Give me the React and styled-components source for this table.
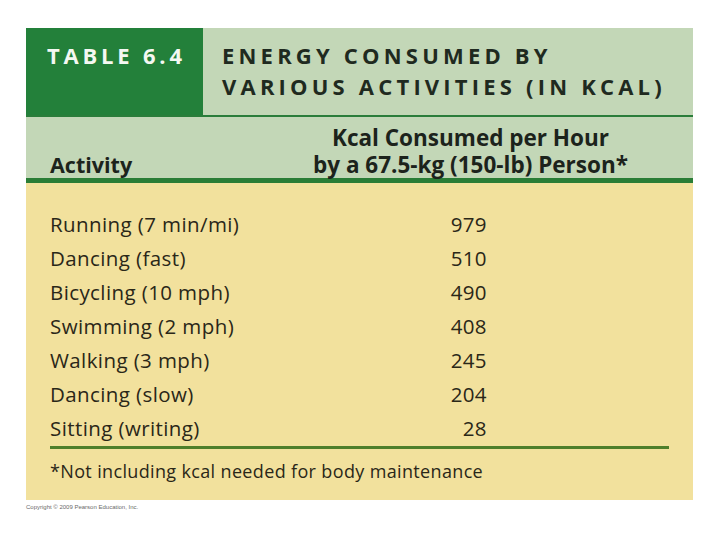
import React from 'react';
import styled, { createGlobalStyle } from 'styled-components';

const GlobalStyle = createGlobalStyle`
	html, body {
		margin: 0;
		padding: 0;
		background: #ffffff;
	}
	body {
		font-family: "Open Sans", "Noto Sans", "DejaVu Sans", sans-serif;
	}
`;

const ROWS = [
	{ activity: 'Running (7 min/mi)', kcal: 979 },
	{ activity: 'Dancing (fast)', kcal: 510 },
	{ activity: 'Bicycling (10 mph)', kcal: 490 },
	{ activity: 'Swimming (2 mph)', kcal: 408 },
	{ activity: 'Walking (3 mph)', kcal: 245 },
	{ activity: 'Dancing (slow)', kcal: 204 },
	{ activity: 'Sitting (writing)', kcal: 28 },
];

const App = () => {
	return (
		<Page>
			<GlobalStyle />
			<Panel>
				<TitleRow>
					<TableLabel>TABLE 6.4</TableLabel>
					<TableTitle>
						<TitleLine>ENERGY CONSUMED BY</TitleLine>
						<TitleLine>VARIOUS ACTIVITIES (IN KCAL)</TitleLine>
					</TableTitle>
				</TitleRow>

				<HeaderRow>
					<HeaderCell>Activity</HeaderCell>
					<HeaderCell align="center">
						<HeaderLine>Kcal Consumed per Hour</HeaderLine>
						<HeaderLine>by a 67.5-kg (150-lb) Person*</HeaderLine>
					</HeaderCell>
				</HeaderRow>

				<Body>
					<RowList>
						{ROWS.map((row) => (
							<Row key={row.activity}>
								<Cell>{row.activity}</Cell>
								<Cell align="right">{row.kcal}</Cell>
							</Row>
						))}
					</RowList>
					<Footnote>*Not including kcal needed for body maintenance</Footnote>
				</Body>
			</Panel>
			<Copyright>Copyright © 2009 Pearson Education, Inc.</Copyright>
		</Page>
	);
};

export default App;

const Page = styled.div`
	width: 720px;
	height: 540px;
	padding: 28px 0 0 26px;
	box-sizing: border-box;
`;

const Panel = styled.div`
	width: 667px;
	height: 472px;
	display: flex;
	flex-direction: column;
	background: #f2e19d;
`;

const TitleRow = styled.div`
	display: grid;
	grid-template-columns: 177px 1fr;
	height: 87px;
	border-bottom: 2px solid #2a7d3a;
	background: #c3d7b7;
`;

const TableLabel = styled.div`
	background: #23803a;
	color: #f4f8f2;
	font-weight: 700;
	font-size: 22px;
	letter-spacing: 3.8px;
	line-height: 31px;
	padding: 12px 0 0 21px;
`;

const TableTitle = styled.div`
	color: #1f2a20;
	font-weight: 700;
	font-size: 22px;
	letter-spacing: 4.2px;
	padding: 12px 0 0 19px;
`;

const TitleLine = styled.div`
	line-height: 31px;
	white-space: nowrap;
`;

const HeaderRow = styled.div`
	display: grid;
	grid-template-columns: 240px 1fr;
	height: 66px;
	box-sizing: border-box;
	border-bottom: 5px solid #2a7d36;
	background: #c3d7b7;
	padding: 0 0 0 24px;
	align-items: end;
`;

const HeaderCell = styled.div`
	color: #1c231c;
	font-weight: 700;
	font-size: ${(p) => (p.align === 'center' ? '22.5px' : '21.5px')};
	line-height: 27px;
	text-align: ${(p) => p.align || 'left'};
	padding-right: ${(p) => (p.align === 'center' ? '42px' : '0')};
`;

const HeaderLine = styled.div`
	line-height: 27px;
	height: 27px;
	white-space: nowrap;
`;

const Body = styled.div`
	flex: 1;
	padding: 24px 24px 0 24px;
`;

const RowList = styled.div`
	display: flex;
	flex-direction: column;
	border-bottom: 3px solid #4f7f2b;
	padding-bottom: 1px;
`;

const Row = styled.div`
	display: grid;
	grid-template-columns: 300px 137px;
	height: 34px;
	align-items: center;
`;

const Cell = styled.div`
	color: #2a2718;
	font-size: 20.5px;
	letter-spacing: 0.4px;
	text-align: ${(p) => p.align || 'left'};
`;

const Footnote = styled.div`
	color: #2a2718;
	font-size: 18px;
	padding-top: 10px;
	letter-spacing: 0.35px;
`;

const Copyright = styled.div`
	font-family: "Liberation Sans", Arial, sans-serif;
	font-size: 6px;
	color: #6a6a6a;
	margin-top: 4px;
`;
